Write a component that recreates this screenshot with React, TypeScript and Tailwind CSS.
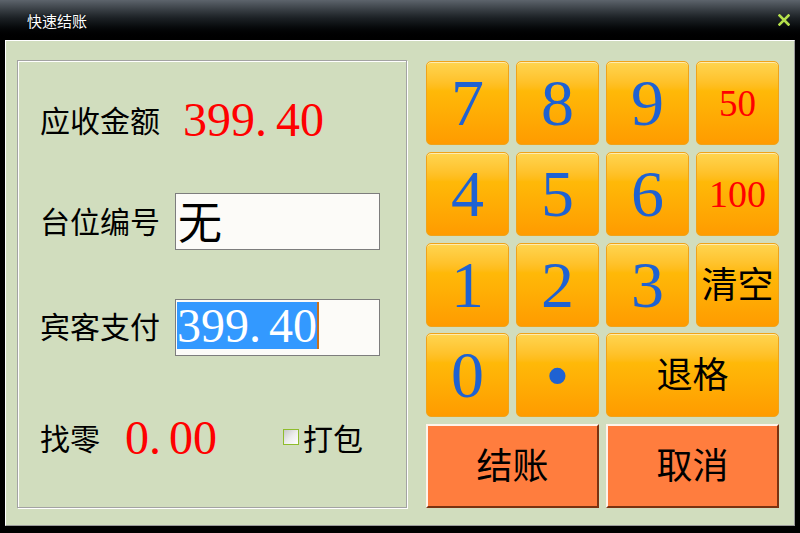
import React from "react";

const serif = "font-['Liberation_Serif',serif]";
const cjk = "font-['Noto_Sans_CJK_SC','Noto_Sans_CJK_JP',sans-serif]";
const orangeBtn =
  "rounded-[5px] border border-[#f0a31a] bg-linear-to-b from-[#ffd54f] via-[#ffb908] via-35% to-[#ff9b00] shadow-[inset_0_1px_0_rgba(255,255,255,0.55)] flex items-center justify-center";
const coralBtn =
  "border-2 border-t-[#fff3ea] border-l-[#fff3ea] border-r-[#7a3210] border-b-[#7a3210] bg-[#ff7d3e] flex items-center justify-center";

function Digit({ d }: { d: string }) {
  return (
    <div className={orangeBtn}>
      <span className={`${serif} text-[66px] leading-none text-[#1f62d2]`}>{d}</span>
    </div>
  );
}

export default function App() {
  return (
    <div className="w-[800px] h-[533px] bg-black flex flex-col overflow-hidden">
      {/* title bar */}
      <div className="h-[40px] flex items-center justify-between pl-[27px] pr-[10px] bg-linear-to-b from-[#5d646c] via-[#1c2125] via-45% to-[#000000]">
        <span className={`${cjk} text-[15px] leading-none text-white [text-shadow:0_0_2px_#000]`}>快速结账</span>
        <svg width="12" height="12" viewBox="0 0 12 12" className="mb-[1px]">
          <path d="M1.5 1.5 L10.5 10.5 M10.5 1.5 L1.5 10.5" stroke="#b4e04c" strokeWidth="2.6" strokeLinecap="square" />
        </svg>
      </div>

      {/* body */}
      <div className="mx-[5px] h-[486px] bg-[#d1ddbe] border border-t-white border-l-white border-r-[#9a9a9a] border-b-[#9a9a9a] flex items-start">
        {/* left panel */}
        <div className="ml-[11px] mt-[19px] w-[390px] h-[448px] border border-[#a3a3a3] shadow-[inset_1px_1px_0_#fff,1px_1px_0_#fff] flex flex-col pl-[22px] pt-[31px]">
          <div className="h-[57px] flex items-center">
            <span className={`${cjk} text-[30px] leading-none text-black w-[120px] -translate-y-[2px]`}>应收金额</span>
            <span className={`${serif} ml-[23px] text-[48px] leading-none text-[#ff0000] -translate-y-[1px]`}>
              399<span className="inline-block w-[21px]">.</span>40
            </span>
          </div>

          <div className="h-[57px] mt-[44px] flex items-center">
            <span className={`${cjk} text-[30px] leading-none text-black w-[120px] -translate-y-[2px]`}>台位编号</span>
            <div className="ml-[15px] w-[205px] h-[57px] bg-[#fcfbf8] border border-[#7d7d7d] flex items-center pl-[2px]">
              <span className={`${cjk} text-[44px] leading-none text-black -translate-y-[2px]`}>无</span>
            </div>
          </div>

          <div className="h-[57px] mt-[49px] flex items-center">
            <span className={`${cjk} text-[30px] leading-none text-black w-[120px] -translate-y-[3px]`}>宾客支付</span>
            <div className="ml-[15px] w-[205px] h-[57px] bg-[#fcfbf8] border border-[#7d7d7d] flex items-start pt-[2px] pl-[1px]">
              <span className={`${serif} inline-block h-[47px] text-[48px] leading-[47px] text-white bg-[#3399ff]`}>
                399<span className="inline-block w-[20px]">.</span>40
              </span>
              <span className="inline-block w-[2px] h-[47px] bg-[#c8701a]" />
            </div>
          </div>

          <div className="h-[57px] mt-[54px] flex items-center">
            <span className={`${cjk} text-[30px] leading-none text-black w-[60px] -translate-y-[2px]`}>找零</span>
            <span className={`${serif} ml-[25px] text-[48px] leading-none text-[#ff0000] -translate-y-[1px]`}>
              0<span className="inline-block w-[20px]">.</span>00
            </span>
            <span className="ml-[66px] w-[16px] h-[16px] border border-[#8fbc2c] bg-linear-to-br from-[#c8c8c8] via-[#ececec] to-[#ffffff] -translate-y-[2px]" />
            <span className={`${cjk} ml-[4px] text-[30px] leading-none text-black -translate-y-[2px]`}>打包</span>
          </div>
        </div>

        {/* keypad */}
        <div className="ml-[19px] mt-[20px] grid grid-cols-[repeat(4,83px)] grid-rows-[repeat(5,84px)] gap-x-[7px] gap-y-[6.75px]">
          <Digit d="7" />
          <Digit d="8" />
          <Digit d="9" />
          <div className={orangeBtn}>
            <span className={`${serif} text-[37px] leading-none text-[#ff0000]`}>50</span>
          </div>
          <Digit d="4" />
          <Digit d="5" />
          <Digit d="6" />
          <div className={orangeBtn}>
            <span className={`${serif} text-[38px] leading-none text-[#ff0000]`}>100</span>
          </div>
          <Digit d="1" />
          <Digit d="2" />
          <Digit d="3" />
          <div className={orangeBtn}>
            <span className={`${cjk} text-[36px] leading-none text-black -translate-y-[3px]`}>清空</span>
          </div>
          <Digit d="0" />
          <div className={orangeBtn}>
            <span className={`${serif} text-[68px] leading-none text-[#1f62d2]`}>•</span>
          </div>
          <div className={`${orangeBtn} col-span-2`}>
            <span className={`${cjk} text-[36px] leading-none text-black -translate-y-[3px]`}>退格</span>
          </div>
          <div className={`${coralBtn} col-span-2`}>
            <span className={`${cjk} text-[36px] leading-none text-black -translate-y-[3px]`}>结账</span>
          </div>
          <div className={`${coralBtn} col-span-2`}>
            <span className={`${cjk} text-[36px] leading-none text-black -translate-y-[3px]`}>取消</span>
          </div>
        </div>
      </div>
    </div>
  );
}
